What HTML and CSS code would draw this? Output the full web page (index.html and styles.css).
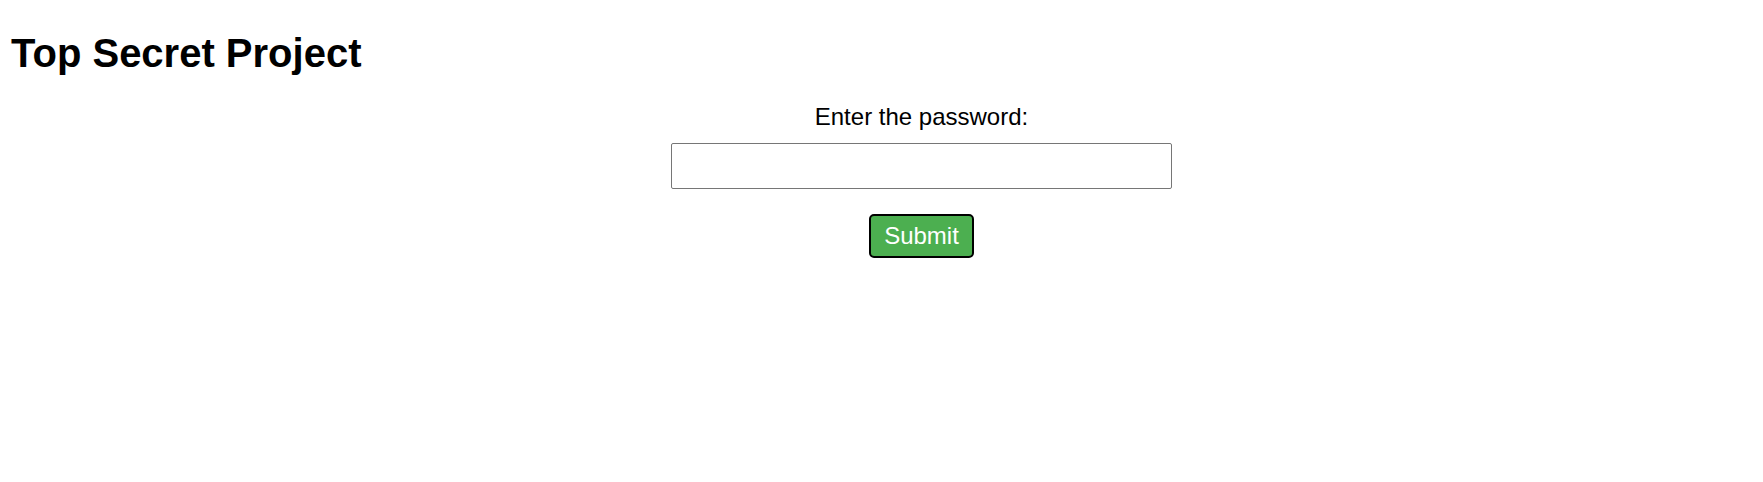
FILE: index.html
```html
<!DOCTYPE html>
<html lang="en">
<head>
<meta charset="utf-8">
<title>Top Secret Project</title>
<link rel="stylesheet" href="styles.css">
</head>
<body>
<div class="page">
  <h1 class="title">Top Secret Project</h1>
  <form class="login" onsubmit="return false;">
    <label class="label" for="pw">Enter the password:</label>
    <input class="field" id="pw" type="password">
    <button class="submit" type="submit">Submit</button>
  </form>
</div>
</body>
</html>
```

FILE: styles.css
```css
html, body {
  margin: 0;
  padding: 0;
  background: #ffffff;
}

body {
  font-family: "Liberation Sans", Arial, sans-serif;
  color: #000000;
}

.page {
  padding: 0 11px;
}

.title {
  font-size: 40px;
  line-height: 46px;
  font-weight: bold;
  margin: 30px 0 27px 0;
}

.login {
  display: flex;
  flex-direction: column;
  align-items: center;
  margin-left: 80px;
}

.label {
  font-size: 24px;
  line-height: 28px;
  margin-bottom: 12px;
}

.field {
  box-sizing: border-box;
  width: 501px;
  height: 46px;
  border: 1px solid #767676;
  border-radius: 2px;
  padding: 0 8px;
  font-size: 20px;
  font-family: inherit;
  background: #ffffff;
  margin: 0;
}

.submit {
  margin-top: 25px;
  box-sizing: border-box;
  height: 44px;
  padding: 0 13px;
  border: 2px solid #000000;
  border-radius: 5px;
  background: #4caf50;
  color: #ffffff;
  font-family: inherit;
  font-size: 24px;
  line-height: 28px;
  cursor: pointer;
}
```
